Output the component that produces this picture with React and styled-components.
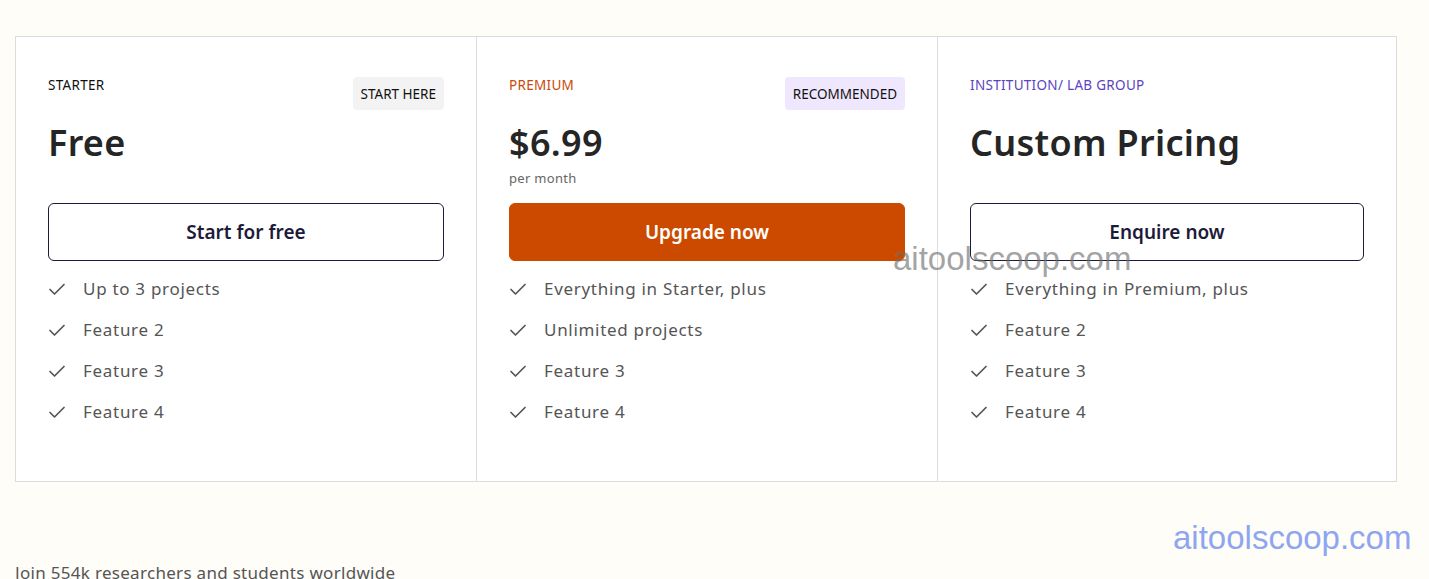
import React from "react";
import styled, { createGlobalStyle } from "styled-components";

const Global = createGlobalStyle`
  html, body { margin: 0; padding: 0; background: #fffdf8; }
  body { font-family: "Noto Sans", Lato, sans-serif; color: #222; }
  * { box-sizing: border-box; }
`;

const Page = styled.div`
  position: relative;
  padding: 36px 32px 0 15px;
  height: 579px;
  overflow: hidden;
`;

const Cards = styled.div`
  display: grid;
  grid-template-columns: 460px 461px 459px;
  width: 1382px;
  border: 1px solid #dcdcdc;
  background: #fff;
`;

const Card = styled.div`
  padding: 40px 32px 49px 32px;
  border-left: ${(p) => (p.first ? "none" : "1px solid #dcdcdc")};
  display: flex;
  flex-direction: column;
`;

const Header = styled.div`
  display: flex;
  justify-content: space-between;
  align-items: flex-start;
  height: 33px;
`;

const Tier = styled.div`
  font-size: 13.5px;
  line-height: 17px;
  letter-spacing: 0.3px;
  text-transform: uppercase;
  color: ${(p) => p.color};
`;

const Badge = styled.div`
  height: 33px;
  padding: 0 8px;
  display: flex;
  align-items: center;
  font-size: 13.5px;
  color: #111;
  background: ${(p) => p.bg};
  border-radius: 4px;
`;

const PriceBlock = styled.div`
  height: 93px;
  padding-top: 10px;
`;

const Price = styled.div`
  font-size: 36px;
  line-height: 46px;
  font-weight: 600;
  letter-spacing: 0.3px;
  color: #252525;
`;

const Period = styled.div`
  margin-top: 3px;
  font-size: 13px;
  line-height: 18px;
  color: #666;
  letter-spacing: 0.3px;
`;

const Button = styled.button`
  height: 58px;
  width: 100%;
  border-radius: 6px;
  font-family: "Noto Sans", Lato, sans-serif;
  font-size: 19px;
  font-weight: 600;
  cursor: pointer;
  border: 1px solid ${(p) => (p.primary ? "#cc4a00" : "#1e1b3a")};
  background: ${(p) => (p.primary ? "#cc4a00" : "#fff")};
  color: ${(p) => (p.primary ? "#fff" : "#1e1b3a")};
`;

const Features = styled.ul`
  list-style: none;
  margin: 7px 0 0;
  padding: 0;
`;

const Feature = styled.li`
  height: 41px;
  display: flex;
  align-items: center;
  gap: 17px;
  font-size: 17px;
  letter-spacing: 0.7px;
  color: #555;
`;

const Watermark = styled.div`
  position: absolute;
  font-family: "Liberation Sans", Arial, sans-serif;
  font-size: 33px;
  line-height: 33px;
  color: ${(p) => p.color};
  left: ${(p) => p.x}px;
  top: ${(p) => p.y}px;
  pointer-events: none;
`;

const Footer = styled.div`
  margin-top: 79px;
  font-size: 17px;
  color: #555;
  letter-spacing: 0.3px;
`;

const Check = () => (
  <svg width="18" height="18" viewBox="0 0 18 18" fill="none">
    <path d="M2 9.5 L6.5 14 L16 4.5" stroke="#555" strokeWidth="1.7" strokeLinecap="round" strokeLinejoin="round" />
  </svg>
);

const plans = [
  {
    tier: "STARTER",
    tierColor: "#111",
    badge: "START HERE",
    badgeBg: "#f3f3f3",
    price: "Free",
    cta: "Start for free",
    features: ["Up to 3 projects", "Feature 2", "Feature 3", "Feature 4"],
  },
  {
    tier: "PREMIUM",
    tierColor: "#c94a0a",
    badge: "RECOMMENDED",
    badgeBg: "#efe7fd",
    price: "$6.99",
    period: "per month",
    cta: "Upgrade now",
    primary: true,
    features: ["Everything in Starter, plus", "Unlimited projects", "Feature 3", "Feature 4"],
  },
  {
    tier: "INSTITUTION/ LAB GROUP",
    tierColor: "#5a43c2",
    price: "Custom Pricing",
    cta: "Enquire now",
    features: ["Everything in Premium, plus", "Feature 2", "Feature 3", "Feature 4"],
  },
];

export default function App() {
  return (
    <>
      <Global />
      <Page>
        <Cards>
          {plans.map((p, i) => (
            <Card key={p.tier} first={i === 0}>
              <Header>
                <Tier color={p.tierColor}>{p.tier}</Tier>
                {p.badge && <Badge bg={p.badgeBg}>{p.badge}</Badge>}
              </Header>
              <PriceBlock>
                <Price>{p.price}</Price>
                {p.period && <Period>{p.period}</Period>}
              </PriceBlock>
              <Button primary={p.primary}>{p.cta}</Button>
              <Features>
                {p.features.map((f) => (
                  <Feature key={f}>
                    <Check />
                    {f}
                  </Feature>
                ))}
              </Features>
            </Card>
          ))}
        </Cards>
        <Footer>Join 554k researchers and students worldwide</Footer>
        <Watermark color="rgba(110,110,110,0.65)" x={893} y={242}>aitoolscoop.com</Watermark>
        <Watermark color="#8ea6f0" x={1173} y={521}>aitoolscoop.com</Watermark>
      </Page>
    </>
  );
}
